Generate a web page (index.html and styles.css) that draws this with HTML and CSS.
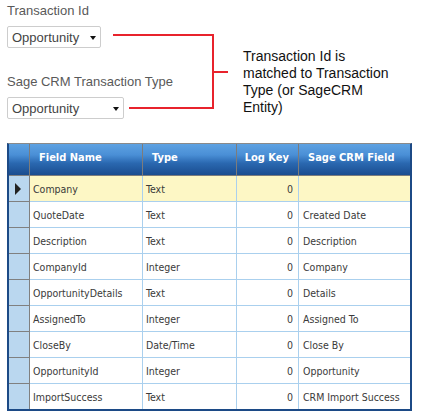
FILE: index.html
```html
<!DOCTYPE html>
<html>
<head>
<meta charset="utf-8">
<link rel="stylesheet" href="styles.css">
</head>
<body>
<div class="top">
  <div class="form">
    <div class="label">Transaction Id</div>
    <div class="select s1"><span>Opportunity</span><i class="caret"></i></div>
    <div class="label l2">Sage CRM Transaction Type</div>
    <div class="select s2"><span>Opportunity</span><i class="caret"></i></div>
  </div>
  <div class="note">Transaction Id is<br>matched to Transaction<br>Type (or SageCRM<br>Entity)</div>
  <svg class="connector" width="240" height="120" viewBox="0 0 240 120">
    <path d="M113 35 H213 V108 H129 M213 72 H228" fill="none" stroke="#e8232c" stroke-width="2"/>
  </svg>
</div>

<div class="grid">
  <div class="hd sel"></div>
  <div class="hd">Field Name</div>
  <div class="hd">Type</div>
  <div class="hd num">Log Key</div>
  <div class="hd last">Sage CRM Field</div>

  <div class="sel cur"><i class="arrow"></i></div>
  <div class="c cur">Company</div><div class="c cur">Text</div><div class="c num cur">0</div><div class="c last cur"></div>

  <div class="sel"></div>
  <div class="c">QuoteDate</div><div class="c">Text</div><div class="c num">0</div><div class="c last">Created Date</div>

  <div class="sel"></div>
  <div class="c">Description</div><div class="c">Text</div><div class="c num">0</div><div class="c last">Description</div>

  <div class="sel"></div>
  <div class="c">CompanyId</div><div class="c">Integer</div><div class="c num">0</div><div class="c last">Company</div>

  <div class="sel"></div>
  <div class="c">OpportunityDetails</div><div class="c">Text</div><div class="c num">0</div><div class="c last">Details</div>

  <div class="sel"></div>
  <div class="c">AssignedTo</div><div class="c">Integer</div><div class="c num">0</div><div class="c last">Assigned To</div>

  <div class="sel"></div>
  <div class="c">CloseBy</div><div class="c">Date/Time</div><div class="c num">0</div><div class="c last">Close By</div>

  <div class="sel"></div>
  <div class="c">OpportunityId</div><div class="c">Integer</div><div class="c num">0</div><div class="c last">Opportunity</div>

  <div class="sel lastrow"></div>
  <div class="c lastrow">ImportSuccess</div><div class="c lastrow">Text</div><div class="c num lastrow">0</div><div class="c last lastrow">CRM Import Success</div>
</div>
</body>
</html>
```

FILE: styles.css
```css
html, body {
  margin: 0;
  padding: 0;
  background: #ffffff;
}

.top {
  position: relative;
  display: grid;
  grid-template-columns: 243px 1fr;
  height: 119px;
}

.form {
  padding: 3px 0 0 7px;
  font-family: "Liberation Sans", Arial, sans-serif;
  font-size: 13px;
}

.label {
  color: #595959;
  line-height: 16px;
  white-space: nowrap;
}

.label.l2 {
  margin-top: 26px;
}

.select {
  box-sizing: border-box;
  margin-top: 7px;
  height: 22px;
  border: 1px solid #cdcdcd;
  border-radius: 2px;
  background: #fff;
  display: flex;
  align-items: center;
  justify-content: space-between;
  padding: 0 4px 0 4px;
  color: #444;
}

.s1 { width: 94px; }
.s2 { width: 117px; }

.caret {
  width: 0;
  height: 0;
  border-left: 3.5px solid transparent;
  border-right: 3.5px solid transparent;
  border-top: 4px solid #111;
  margin-top: 1px;
}

.note {
  padding-top: 48px;
  font-family: "Liberation Sans", Arial, sans-serif;
  font-size: 14px;
  line-height: 17px;
  color: #111;
}

.connector {
  position: absolute;
  left: 0;
  top: 0;
}

.grid {
  margin: 24px 0 0 7px;
  width: 405px;
  box-sizing: border-box;
  display: grid;
  grid-template-columns: 21px 113px 94px 62px 111px;
  border-top: 1px solid #8a8a8a;
  border-left: 2px solid #1c4a86;
  border-right: 2px solid #1c4a86;
  border-bottom: 2px solid #1c4a86;
  font-family: "DejaVu Sans Condensed", "DejaVu Sans", sans-serif;
  font-stretch: condensed;
  font-size: 10.5px;
}

.grid > div {
  box-sizing: border-box;
  border-right: 1px solid #aad0ee;
  border-bottom: 1px solid #aad0ee;
  height: 26px;
  display: flex;
  align-items: center;
  white-space: nowrap;
  overflow: hidden;
}

.grid > .hd {
  height: 32px;
  background: linear-gradient(to bottom, #5ea2e2 0%, #4a8fd6 35%, #2a68b0 62%, #1a4c8f 100%);
  color: #fff;
  font-size: 11px;
  font-weight: bold;
  padding: 0 0 5px 9px;
  border-right: 1px solid #7c7c7c;
  border-bottom: 1px solid #7c7c7c;
}

.grid > .hd.num {
  justify-content: flex-end;
  padding-right: 9px;
}

.grid > .last {
  border-right: none;
}

.grid > .sel {
  background: #bad7ef;
  border-right: 1px solid #808080;
  border-bottom: 1px solid #808080;
  padding-left: 6px;
}

.grid > .hd.sel {
  padding: 0;
  background: linear-gradient(to bottom, #5ea2e2 0%, #4a8fd6 35%, #2a68b0 62%, #1a4c8f 100%);
  border-right: 1px solid #7c7c7c;
}

.c {
  color: #3a3a3a;
  padding-left: 3px;
}

.c.num {
  justify-content: flex-end;
  padding-right: 5px;
  padding-left: 0;
}

.c.last {
  padding-left: 4px;
}

.cur:not(.sel) {
  background: #fdf7c5;
}

.grid > .lastrow {
  border-bottom: none;
  height: 25px;
}

.arrow {
  width: 0;
  height: 0;
  border-left: 6px solid #222;
  border-top: 6px solid transparent;
  border-bottom: 6px solid transparent;
}
```
